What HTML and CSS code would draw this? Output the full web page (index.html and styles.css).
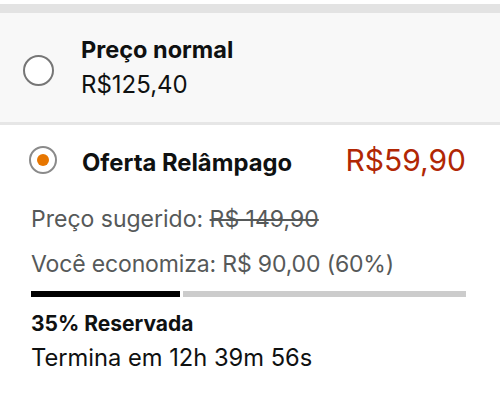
FILE: index.html
```html
<!DOCTYPE html>
<html lang="pt-BR">
<head>
<meta charset="utf-8">
<link rel="stylesheet" href="styles.css">
</head>
<body>
<div class="offers">
  <label class="option option-normal">
    <span class="radio"></span>
    <span class="option-text">
      <span class="option-title">Preço normal</span>
      <span class="option-price">R$125,40</span>
    </span>
  </label>

  <div class="option-deal">
    <label class="deal-head">
      <span class="radio radio-checked"><span class="radio-dot"></span></span>
      <span class="option-title deal-title">Oferta Relâmpago</span>
      <span class="deal-price">R$59,90</span>
    </label>
    <p class="info-line info-first">Preço sugerido: <s>R$ 149,90</s></p>
    <p class="info-line info-savings">Você economiza: R$ 90,00 (60%)</p>
    <div class="progress">
      <span class="progress-fill" style="width: 35%"></span>
    </div>
    <p class="claimed">35% Reservada</p>
    <p class="ends">Termina em 12h 39m 56s</p>
  </div>
</div>
</body>
</html>
```
FILE: styles.css
```css
* { box-sizing: border-box; }

body {
  margin: 0;
  background: #fff;
  font-family: "Inter", "Noto Sans", sans-serif;
  color: #0f1111;
}

.offers {
  padding-top: 4px;
}

/* unselected option: grey card */
.option-normal {
  display: flex;
  align-items: center;
  gap: 27px;
  height: 121px;
  padding-left: 23px;
  background: #f8f8f8;
  border-top: 9px solid #e3e3e3;
  border-bottom: 3px solid #e6e6e6;
}

.radio {
  flex: none;
  width: 31px;
  height: 31px;
  border-radius: 50%;
  border: 2px solid #767676;
  background: #fff;
  display: flex;
  align-items: center;
  justify-content: center;
}

.option-normal .radio {
  margin-top: 5px;
}

.option-text {
  display: flex;
  flex-direction: column;
  gap: 5px;
}

.option-title {
  font-weight: 700;
  font-size: 23.5px;
  line-height: 30px;
}

.option-price {
  font-size: 24px;
  line-height: 30px;
}

/* selected option: lightning deal */
.option-deal {
  padding: 17px 34px 0 31px;
}

.deal-head {
  display: flex;
  align-items: baseline;
}

.radio-checked {
  align-self: center;
  width: 28px;
  height: 28px;
  margin-left: -2px;
  border-color: #8a8a8a;
}

.radio-dot {
  width: 12px;
  height: 12px;
  border-radius: 50%;
  background: #e77600;
}

.deal-title {
  margin-left: 25px;
  font-size: 23.8px;
}

.deal-price {
  margin-left: auto;
  font-size: 30px;
  line-height: 36px;
  color: #b12704;
}

.info-line {
  margin: 15px 0 0;
  font-size: 23px;
  line-height: 30px;
  color: #565959;
}

.info-first {
  margin-top: 26px;
}

.info-savings {
  letter-spacing: -0.15px;
}

.progress {
  height: 6px;
  margin-top: 12px;
  background: #cccccc;
}

.progress-fill {
  display: block;
  height: 100%;
  background: #000;
  border-right: 3px solid #fff;
}

.claimed {
  margin: 15px 0 0;
  font-weight: 700;
  font-size: 21px;
  line-height: 24px;
}

.ends {
  margin: 7px 0 0;
  font-size: 23.7px;
  line-height: 30px;
}
```
